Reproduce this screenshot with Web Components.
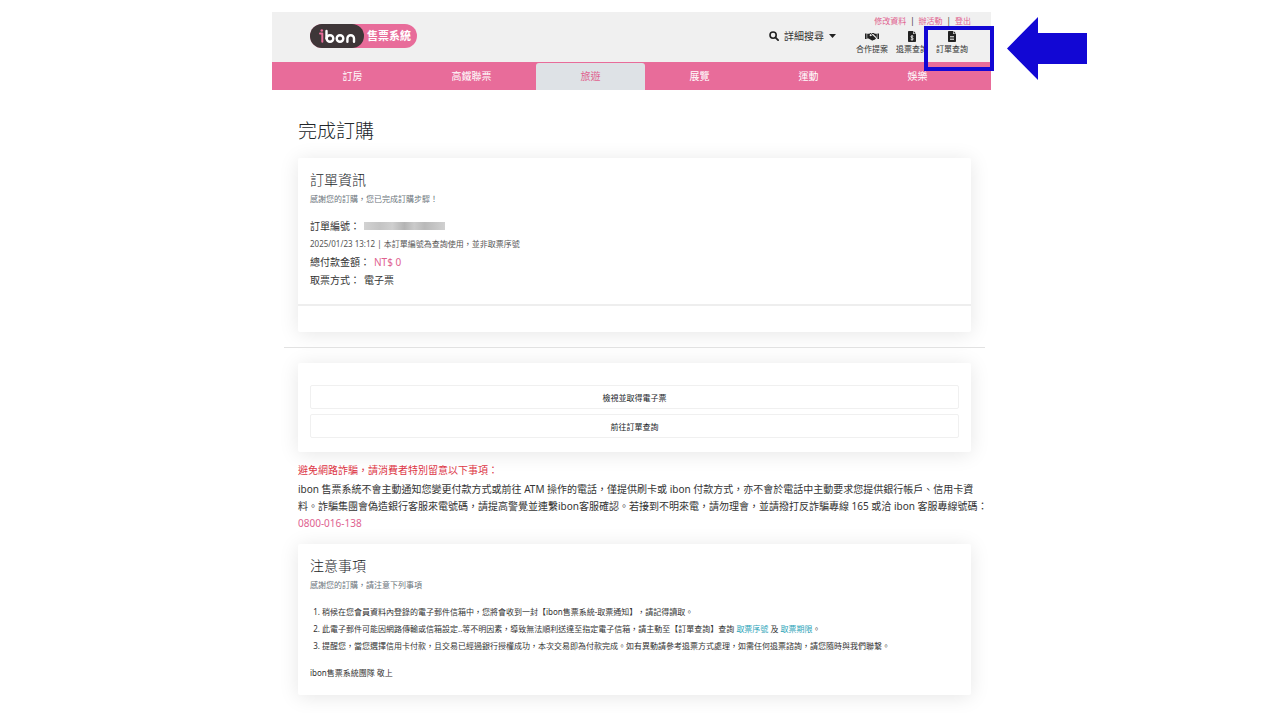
<!DOCTYPE html>
<html lang="zh-Hant">
<head>
<meta charset="utf-8">
<meta name="viewport" content="width=device-width, initial-scale=1">
<title>完成訂購</title>
<style>
    body {
        margin: 0;
        background: #fff;
        color: #333;
        font-family: "Noto Sans", "Noto Sans CJK TC", sans-serif;
        font-size: 10px;
    }
</style>
</head>
<body>
<order-page></order-page>

<script>
/* Small helper: defines an element whose shadow root is filled from a template string */
function define(name, html) {
    const template = document.createElement('template');
    template.innerHTML = html;

    customElements.define(name, class extends HTMLElement {
        constructor() {
            super();
            this.attachShadow({ mode: 'open' });
            this.shadowRoot.appendChild(template.content.cloneNode(true));
        }
    });
}

// Brand logo
define('ibon-logo', `
<style>
    :host { display: block; }
    a {
        display: flex;
        align-items: center;
        height: 24px;
        border-radius: 12px;
        background: #e86c9a;
        color: #fff;
        text-decoration: none;
    }
    .mark {
        box-sizing: border-box;
        width: 54px;
        height: 24px;
        padding: 4px 8px;
        border-radius: 12px;
        background: #3e3638;
    }
    svg { display: block; }
    .name {
        padding: 0 6px 0 3px;
        font-size: 11px;
        font-weight: 700;
        line-height: 24px;
    }
</style>
<a href="#">
    <span class="mark">
        <svg width="38" height="16" viewBox="0 0 38 16" fill="none" stroke-width="2.4" stroke-linecap="round" aria-label="ibon">
            <path d="M2 5.6H4.300V13.800" stroke="#e86c9a" stroke-width="2" stroke-linejoin="round"/>
            <circle cx="3.800" cy="2.500" r="1.300" fill="#e86c9a"/>
            <g stroke="#fff">
                <path d="M8.500 3V10.500"/>
                <circle cx="12" cy="10.500" r="3.300"/>
                <circle cx="22" cy="10.500" r="3.300"/>
                <path d="M29.400 13.800V10.500a3.300 3.300 0 0 1 6.600 0V13.800"/>
            </g>
        </svg>
    </span>
    <span class="name">售票系統</span>
</a>
`);

// Icon over a short label
define('icon-link', `
<style>
    :host { display: block; position: relative; }
    a {
        display: flex;
        flex-direction: column;
        align-items: center;
        color: #333;
        font-size: 8px;
        line-height: 12px;
        text-decoration: none;
        white-space: nowrap;
    }
    .icon { display: block; height: 12px; }
    .marker { display: none; }
    :host([marked]) .marker {
        display: block;
        position: absolute;
        box-sizing: border-box;
        top: -5px;
        left: -12px;
        width: 70px;
        height: 45px;
        border: 4px solid #1207d4;
        pointer-events: none;
    }
</style>
<a href="#"><span class="icon"><slot name="icon"></slot></span><span><slot></slot></span></a>
<span class="marker"></span>
`);

define('site-header', `
<style>
    :host { display: block; background: #f0f0f0; }
    .bar {
        display: flex;
        align-items: flex-start;
        justify-content: space-between;
        height: 50px;
        padding: 0 20px 0 38px;
    }
    ibon-logo { margin-top: 12px; }
    .tools {
        display: flex;
        align-items: flex-start;
        gap: 20px;
    }
    .search {
        display: flex;
        align-items: center;
        gap: 5px;
        margin-top: 16px;
        padding: 0;
        border: 0;
        background: none;
        color: #333;
        font: inherit;
        line-height: 16px;
    }
    .account {
        display: flex;
        flex-direction: column;
        gap: 4px;
        padding-top: 3px;
    }
    .links {
        display: flex;
        justify-content: flex-end;
        gap: 4px;
        font-size: 8px;
        line-height: 12px;
    }
    .links a { color: #e0628f; text-decoration: none; }
    .shortcuts { display: flex; gap: 8px; padding-right: 3px; }
    svg { display: block; }
</style>
<div class="bar">
    <ibon-logo></ibon-logo>
    <div class="tools">
        <button class="search" type="button">
            <svg width="10" height="10" viewBox="0 0 10 10" fill="none" stroke="#222" stroke-linecap="round">
                <circle cx="4.1" cy="4.1" r="3.1" stroke-width="1.6"/>
                <path d="M6.6 6.6L9.1 9.1" stroke-width="1.8"/>
            </svg>
            <span>詳細搜尋</span>
            <svg width="7" height="4" viewBox="0 0 7 4"><path d="M0 0h7L3.5 4z" fill="#222"/></svg>
        </button>
        <div class="account">
            <div class="links">
                <a href="#">修改資料</a><span>|</span><a href="#">辦活動</a><span>|</span><a href="#">登出</a>
            </div>
            <div class="shortcuts">
                <icon-link>
                    <svg slot="icon" width="14" height="12" viewBox="0 0 14 12">
                        <path d="M0 2.5h1.6v5.6H0zM12.4 2.5H14v5.6h-1.6zM2.2 2.8h2L5.4 2h1.2L4.7 4c-.4 1 .9 1.5 1.7.8l1-.8 3.3 3.1c.6.7-.2 1.5-.9 1.1-.1.8-.9 1.1-1.4.7-.4.8-1.3.9-1.8.4L3.5 7.5H2.2zM11.8 2.8H10L8.6 2H7.4L6 3.6c-.1.5.2.5.5.3l1-.9h.7l3 3.1.4.9h.2z" fill="#222"/>
                    </svg>
                    合作提案
                </icon-link>
                <icon-link>
                    <svg slot="icon" width="8" height="12" viewBox="0 0 8 12">
                        <path d="M1 0h4v3h3v7.2a.8.8 0 0 1-.8.8H.8a.8.8 0 0 1-.8-.8V.8A.8.8 0 0 1 .8 0zM5.6 0L8 2.4H5.6z" fill="#222"/>
                        <path d="M5.3 5.3C4.6 4.7 2.9 4.7 2.9 5.8S5.3 6.7 5.3 7.9 3.4 9 2.7 8.3M4 4.2v5.4" fill="none" stroke="#fff" stroke-width=".8"/>
                    </svg>
                    退票查詢
                </icon-link>
                <icon-link marked>
                    <svg slot="icon" width="8" height="12" viewBox="0 0 8 12">
                        <path d="M.8 0H5v3h3v7.2a.8.8 0 0 1-.8.8H.8a.8.8 0 0 1-.8-.8V.8A.8.8 0 0 1 .8 0zM5.6 0L8 2.4H5.6z" fill="#222"/>
                        <path d="M2 5.8h4M2 8.2h4" stroke="#fff"/>
                    </svg>
                    訂單查詢
                </icon-link>
            </div>
        </div>
    </div>
</div>
`);

define('site-nav', `
<style>
    :host { display: block; background: #e86c9a; }
    nav {
        display: flex;
        padding: 1px 19px 0 26px;
    }
    a {
        flex: 1 1 auto;
        color: #fff;
        line-height: 27px;
        text-align: center;
        text-decoration: none;
    }
    a[aria-current] {
        border-radius: 3px 3px 0 0;
        background: #dee2e6;
        color: #e0628f;
    }
</style>
<nav>
    <a href="#">訂房</a>
    <a href="#">高鐵聯票</a>
    <a href="#" aria-current="page">旅遊</a>
    <a href="#">展覽</a>
    <a href="#">運動</a>
    <a href="#">娛樂</a>
</nav>
`);

// White box with a soft shadow; heading, sub heading and footer are optional slots
define('info-card', `
<style>
    :host {
        display: block;
        border-radius: 2px;
        background: #fff;
        box-shadow: 0 2px 20px rgba(0, 0, 0, 0.1);
    }
    .body { padding: 12px; }
    ::slotted(h2) {
        margin: 0;
        font-size: 14px;
        font-weight: 300;
        line-height: 20px;
    }
    ::slotted([slot="sub"]) {
        margin: 0;
        color: #6c757d;
        font-size: 8px;
        line-height: 18px;
    }
    ::slotted([slot="footer"]) {
        height: 26px;
        border-top: 2px solid #eee;
    }
</style>
<div class="body">
    <slot name="heading"></slot>
    <slot name="sub"></slot>
    <slot></slot>
</div>
<slot name="footer"></slot>
`);

define('outline-button', `
<style>
    :host { display: block; }
    button {
        display: block;
        box-sizing: border-box;
        width: 100%;
        height: 24px;
        padding: 0;
        border: 1px solid #f0f0f0;
        border-radius: 2px;
        background: #fff;
        color: #212529;
        font: inherit;
        font-size: 8px;
    }
</style>
<button type="button"><slot></slot></button>
`);

define('order-page', `
<style>
    :host {
        display: grid;
        grid-template-columns: minmax(0, 272fr) minmax(0, 719fr) minmax(0, 289fr);
        padding-top: 12px;
    }
    .site { grid-column: 2; }
    .pointer { display: block; margin: 5px 0 0 16px; }
    main { padding: 27px 20px 18px 26px; }
    h1 {
        margin: 0 0 13px;
        color: #212529;
        font-size: 19px;
        font-weight: 300;
        line-height: 28px;
    }
    h2 { color: #212529; }
    hr {
        margin: 15px -14px;
        border: 0;
        border-top: 1px solid #e2e2e2;
    }
    p { margin: 0; }
    a { color: #e0628f; text-decoration: none; }
    .row { display: flex; align-items: center; gap: 4px; line-height: 18px; }
    .order { padding: 9px 0 3px; }
    .amount { color: #e0628f; }
    .meta { color: #555; font-size: 8px; line-height: 18px; }
    .masked {
        width: 81px;
        height: 8px;
        background: linear-gradient(90deg, #d2d2d2, #c4c4c4 20%, #cfcfcf 35%, #b4b4b4 50%, #cacaca 62%, #b9b9b9 75%, #d0d0d0);
    }
    .actions { display: grid; gap: 5px; padding: 10px 0 2px; }
    .alert { margin-top: 9px; color: #dc3545; line-height: 18px; }
    .notice { margin: 2px -20px 12px 0; line-height: 17px; }
    ol {
        margin: 0;
        padding: 9px 0 0 12px;
        font-size: 8px;
        line-height: 17px;
    }
    ol a { color: #2ba3b8; }
    .sign { padding: 10px 0 2px; font-size: 8px; line-height: 17px; }
</style>
<div class="site">
    <site-header></site-header>
    <site-nav></site-nav>
    <main>
        <h1>完成訂購</h1>
        <info-card>
            <h2 slot="heading">訂單資訊</h2>
            <p slot="sub">感謝您的訂購，您已完成訂購步驟！</p>
            <div class="order">
                <div class="row"><span>訂單編號：</span><span class="masked"></span></div>
                <p class="meta">2025/01/23 13:12 | 本訂單編號為查詢使用，並非取票序號</p>
                <div class="row"><span>總付款金額：</span><span class="amount">NT$ 0</span></div>
                <div class="row"><span>取票方式：</span><span>電子票</span></div>
            </div>
            <div slot="footer"></div>
        </info-card>
        <hr>
        <info-card>
            <div class="actions">
                <outline-button>檢視並取得電子票</outline-button>
                <outline-button>前往訂單查詢</outline-button>
            </div>
        </info-card>
        <p class="alert">避免網路詐騙，請消費者特別留意以下事項：</p>
        <p class="notice">ibon 售票系統不會主動通知您變更付款方式或前往 ATM 操作的電話，僅提供刷卡或 ibon 付款方式，亦不會於電話中主動要求您提供銀行帳戶、信用卡資<br>料。詐騙集團會偽造銀行客服來電號碼，請提高警覺並連繫ibon客服確認。若接到不明來電，請勿理會，並請撥打反詐騙專線 165 或洽 ibon 客服專線號碼：<br><a href="tel:0800016138">0800-016-138</a></p>
        <info-card>
            <h2 slot="heading">注意事項</h2>
            <p slot="sub">感謝您的訂購，請注意下列事項</p>
            <ol>
                <li>稍候在您會員資料內登錄的電子郵件信箱中，您將會收到一封【ibon售票系統-取票通知】，請記得讀取。</li>
                <li>此電子郵件可能因網路傳輸或信箱設定..等不明因素，導致無法順利送達至指定電子信箱，請主動至【訂單查詢】查詢 <a href="#">取票序號</a> 及 <a href="#">取票期限</a>。</li>
                <li>提醒您，當您選擇信用卡付款，且交易已經過銀行授權成功，本次交易即為付款完成。如有異動請參考退票方式處理，如需任何退票諮詢，請您隨時與我們聯繫。</li>
            </ol>
            <p class="sign">ibon售票系統團隊 敬上</p>
        </info-card>
    </main>
</div>
<svg class="pointer" width="80" height="63" viewBox="0 0 80 63" role="img" aria-label="訂單查詢">
    <path d="M0 31.5L31 0V16H80V47H31V63z" fill="#1207d4"/>
</svg>
`);
</script>
</body>
</html>
